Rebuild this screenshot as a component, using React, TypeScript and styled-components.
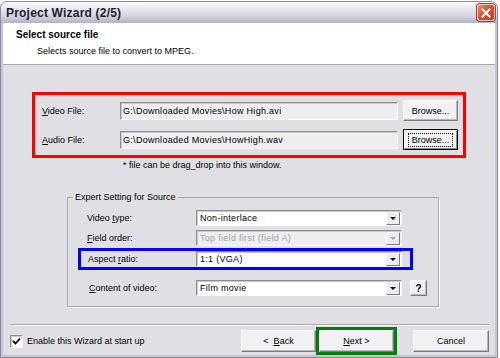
import React from "react";
import styled, { createGlobalStyle } from "styled-components";

const GlobalStyle = createGlobalStyle`
  html, body {
    margin: 0;
    padding: 0;
    background: #ffffff;
  }
  body {
    font-family: "Liberation Sans", Arial, sans-serif;
    font-size: 9px;
    color: #000;
  }
  #root {
    width: 500px;
    height: 358px;
    overflow: hidden;
  }
`;

const Window = styled.div`
  box-sizing: border-box;
  width: 498px;
  height: 357px;
  margin-top: 1px;
  border: 1px solid #8a899f;
  border-radius: 7px 7px 0 0;
  display: flex;
  flex-direction: column;
  overflow: hidden;
  background: #c6c5d7;
`;

const TitleBar = styled.div`
  height: 21px;
  flex: none;
  display: flex;
  align-items: center;
  justify-content: space-between;
  padding: 0 2px 0 5px;
  background: linear-gradient(#fdfdfe 0%, #e9e9f0 30%, #d2d1de 70%, #b3b2c6 100%);
`;

const TitleText = styled.span`
  font-size: 12px;
  font-weight: bold;
  color: #22222e;
  letter-spacing: 0.2px;
`;

const CloseButton = styled.div`
  box-sizing: border-box;
  width: 18px;
  height: 17px;
  border-radius: 3px;
  border: 1px solid #f4c9bf;
  box-shadow: 0 0 0 1px #a83c2a;
  background: linear-gradient(135deg, #ec8a70 0%, #d95237 45%, #c23a22 100%);
  display: flex;
  align-items: center;
  justify-content: center;
`;

const Frame = styled.div`
  flex: 1;
  display: flex;
  flex-direction: column;
  border: 2px solid #c6c5d7;
  border-top: none;
`;

const Header = styled.div`
  height: 41px;
  flex: none;
  background: #ffffff;
  border-bottom: 1px solid #a7a6aa;
  padding-left: 13px;
`;

const HeaderTitle = styled.div`
  padding-top: 6px;
  font-size: 10px;
  line-height: 12px;
  font-weight: bold;
`;

const HeaderSub = styled.div`
  margin-top: 5px;
  padding-left: 21px;
  line-height: 11px;
`;

const Content = styled.div`
  flex: 1;
  background: #e0dfe3;
  display: flex;
  flex-direction: column;
  align-items: flex-start;
`;

const RedBox = styled.div`
  box-sizing: border-box;
  margin: 27px 0 0 29px;
  width: 434px;
  height: 66px;
  border: 3px solid #ff0000;
  padding: 5px 0 0 7px;
  display: flex;
  flex-direction: column;
  gap: 8px;
`;

const FileRow = styled.div`
  display: flex;
  align-items: center;
  height: 21px;
`;

const FileLabel = styled.span`
  width: 78px;
`;

const TextField = styled.div`
  box-sizing: border-box;
  width: 278px;
  height: 18px;
  line-height: 16px;
  padding-left: 2px;
  letter-spacing: 0.3px;
  background: #efeeee;
  border: 1px solid;
  border-color: #8e8e92 #ffffff #ffffff #8e8e92;
  box-shadow: inset 1px 1px 0 #c9c8cc;
  white-space: nowrap;
  overflow: hidden;
`;

const Button = styled.div<{ $w: number; $focused?: boolean }>`
  box-sizing: border-box;
  width: ${p => p.$w}px;
  height: 21px;
  display: flex;
  align-items: center;
  justify-content: center;
  background: #f1f0f2;
  border: 1px solid;
  border-color: ${p =>
    p.$focused ? "#000" : "#ffffff #7b7a80 #7b7a80 #ffffff"};
  box-shadow: ${p =>
    p.$focused
      ? "inset 1px 1px 0 #fff, inset -1px -1px 0 #8a898f"
      : "inset -1px -1px 0 #b8b7bc"};
  flex: none;
  white-space: pre;
`;

const FocusText = styled.span`
  padding: 1px 3px;
  outline: 1px dotted #000;
`;

const BrowseButton = styled(Button)`
  margin-left: 5px;
`;

const Note = styled.div`
  margin: 2px 0 0 120px;
  line-height: 11px;
`;

const GroupBox = styled.fieldset`
  margin: 21px 0 0 64px;
  width: 372px;
  box-sizing: border-box;
  padding: 0 0 10px 0;
  border: 1px solid #a9a8ad;
  box-shadow: 1px 1px 0 #ffffff;
  min-inline-size: 0;
`;

const Legend = styled.legend`
  margin-left: 5px;
  padding: 0 2px;
  line-height: 11px;
  background: #e0dfe3;
`;

const Rows = styled.div`
  padding-left: 13px;
  display: flex;
  flex-direction: column;
  align-items: flex-start;
`;

const SettingRow = styled.div<{ $top: number; $highlight?: boolean }>`
  display: flex;
  align-items: center;
  height: 16px;
  margin-top: ${p => p.$top}px;
  width: 329px;
  outline: ${p => (p.$highlight ? "3px solid #0000ff" : "none")};
`;

const SettingLabel = styled.span<{ $indent: number }>`
  padding-left: ${p => p.$indent}px;
  width: ${p => 115 - p.$indent}px;
  flex: none;
`;

const Combo = styled.div<{ $disabled?: boolean }>`
  box-sizing: border-box;
  width: 206px;
  height: 16px;
  display: flex;
  align-items: center;
  border: 1px solid;
  border-color: #8e8e92 #ffffff #ffffff #8e8e92;
  box-shadow: inset 1px 1px 0 #c9c8cc;
  background: ${p => (p.$disabled ? "#eeedef" : "#ffffff")};
  color: ${p => (p.$disabled ? "#a4a3a8" : "#000")};
  flex: none;
`;

const ComboText = styled.span`
  flex: 1;
  padding-left: 3px;
  letter-spacing: 0.3px;
  white-space: nowrap;
  overflow: hidden;
`;

const ComboArrow = styled.div<{ $disabled?: boolean }>`
  box-sizing: border-box;
  width: 14px;
  height: 13px;
  margin-right: 1px;
  display: flex;
  align-items: center;
  justify-content: center;
  background: #ecebee;
  border: 1px solid;
  border-color: #ffffff #7b7a80 #7b7a80 #ffffff;
  &::after {
    content: "";
    border-left: 3px solid transparent;
    border-right: 3px solid transparent;
    border-top: 3px solid ${p => (p.$disabled ? "#a4a3a8" : "#000")};
  }
`;

const HelpButton = styled.div`
  box-sizing: border-box;
  width: 17px;
  height: 16px;
  margin-left: 8px;
  display: flex;
  align-items: center;
  justify-content: center;
  font-weight: bold;
  font-size: 10px;
  background: #f1f0f2;
  border: 1px solid;
  border-color: #ffffff #7b7a80 #7b7a80 #ffffff;
  box-shadow: inset -1px -1px 0 #b8b7bc;
  flex: none;
`;

const Separator = styled.div`
  align-self: stretch;
  margin: 17px 6px 0 7px;
  border-top: 1px solid #a9a8ad;
  border-bottom: 1px solid #ffffff;
`;

const Footer = styled.div`
  align-self: stretch;
  margin-top: 4px;
  height: 22px;
  padding: 0 6px 0 7px;
  display: flex;
  align-items: center;
`;

const CheckBox = styled.div`
  box-sizing: border-box;
  width: 13px;
  height: 13px;
  background: #ffffff;
  border: 1px solid;
  border-color: #8e8e92 #ffffff #ffffff #8e8e92;
  box-shadow: inset 1px 1px 0 #c9c8cc;
  display: flex;
  align-items: center;
  justify-content: center;
`;

const CheckLabel = styled.span`
  margin-left: 4px;
  flex: 1;
`;

const NavButton = styled(Button)<{ $gap: number; $mark?: boolean }>`
  height: 22px;
  margin-left: ${p => p.$gap}px;
  outline: ${p => (p.$mark ? "3px solid #008000" : "none")};
`;

const U = styled.span`
  text-decoration: underline;
`;

const App: React.FC = () => (
  <>
    <GlobalStyle />
    <Window>
      <TitleBar>
        <TitleText>Project Wizard (2/5)</TitleText>
        <CloseButton>
          <svg width="10" height="10" viewBox="0 0 10 10">
            <path
              d="M1.5 1.5 L8.5 8.5 M8.5 1.5 L1.5 8.5"
              stroke="#ffffff"
              strokeWidth="2"
              strokeLinecap="square"
            />
          </svg>
        </CloseButton>
      </TitleBar>
      <Frame>
        <Header>
          <HeaderTitle>Select source file</HeaderTitle>
          <HeaderSub>Selects source file to convert to MPEG.</HeaderSub>
        </Header>
        <Content>
          <RedBox>
            <FileRow>
              <FileLabel>
                <U>V</U>ideo File:
              </FileLabel>
              <TextField>G:\Downloaded Movies\How High.avi</TextField>
              <BrowseButton $w={55}>Browse...</BrowseButton>
            </FileRow>
            <FileRow>
              <FileLabel>
                <U>A</U>udio File:
              </FileLabel>
              <TextField>G:\Downloaded Movies\HowHigh.wav</TextField>
              <BrowseButton $w={55} $focused>
                <FocusText>Browse...</FocusText>
              </BrowseButton>
            </FileRow>
          </RedBox>
          <Note>* file can be drag_drop into this window.</Note>

          <GroupBox>
            <Legend>Expert Setting for Source</Legend>
            <Rows>
              <SettingRow $top={7}>
                <SettingLabel $indent={6}>
                  Video <U>t</U>ype:
                </SettingLabel>
                <Combo>
                  <ComboText>Non-interlace</ComboText>
                  <ComboArrow />
                </Combo>
              </SettingRow>
              <SettingRow $top={4}>
                <SettingLabel $indent={6}>
                  <U>F</U>ield order:
                </SettingLabel>
                <Combo $disabled>
                  <ComboText>Top field first (field A)</ComboText>
                  <ComboArrow $disabled />
                </Combo>
              </SettingRow>
              <SettingRow $top={5} $highlight>
                <SettingLabel $indent={7}>
                  Aspect <U>r</U>atio:
                </SettingLabel>
                <Combo>
                  <ComboText>1:1 (VGA)</ComboText>
                  <ComboArrow />
                </Combo>
              </SettingRow>
              <SettingRow $top={13}>
                <SettingLabel $indent={8}>
                  <U>C</U>ontent of video:
                </SettingLabel>
                <Combo>
                  <ComboText>Film movie</ComboText>
                  <ComboArrow />
                </Combo>
                <HelpButton>?</HelpButton>
              </SettingRow>
            </Rows>
          </GroupBox>

          <Separator />
          <Footer>
            <CheckBox>
              <svg width="9" height="9" viewBox="0 0 9 9">
                <path
                  d="M1 4 L3.5 6.5 L8 1.5"
                  fill="none"
                  stroke="#000"
                  strokeWidth="1.8"
                />
              </svg>
            </CheckBox>
            <CheckLabel>Enable this Wizard at start up</CheckLabel>
            <NavButton $w={75} $gap={0}>
              <span>
                &lt;&nbsp;&nbsp;<U>B</U>ack
              </span>
            </NavButton>
            <NavButton $w={75} $gap={3} $mark>
              <span>
                <U>N</U>ext &gt;
              </span>
            </NavButton>
            <NavButton $w={76} $gap={19}>
              Cancel
            </NavButton>
          </Footer>
        </Content>
      </Frame>
    </Window>
  </>
);

export default App;
